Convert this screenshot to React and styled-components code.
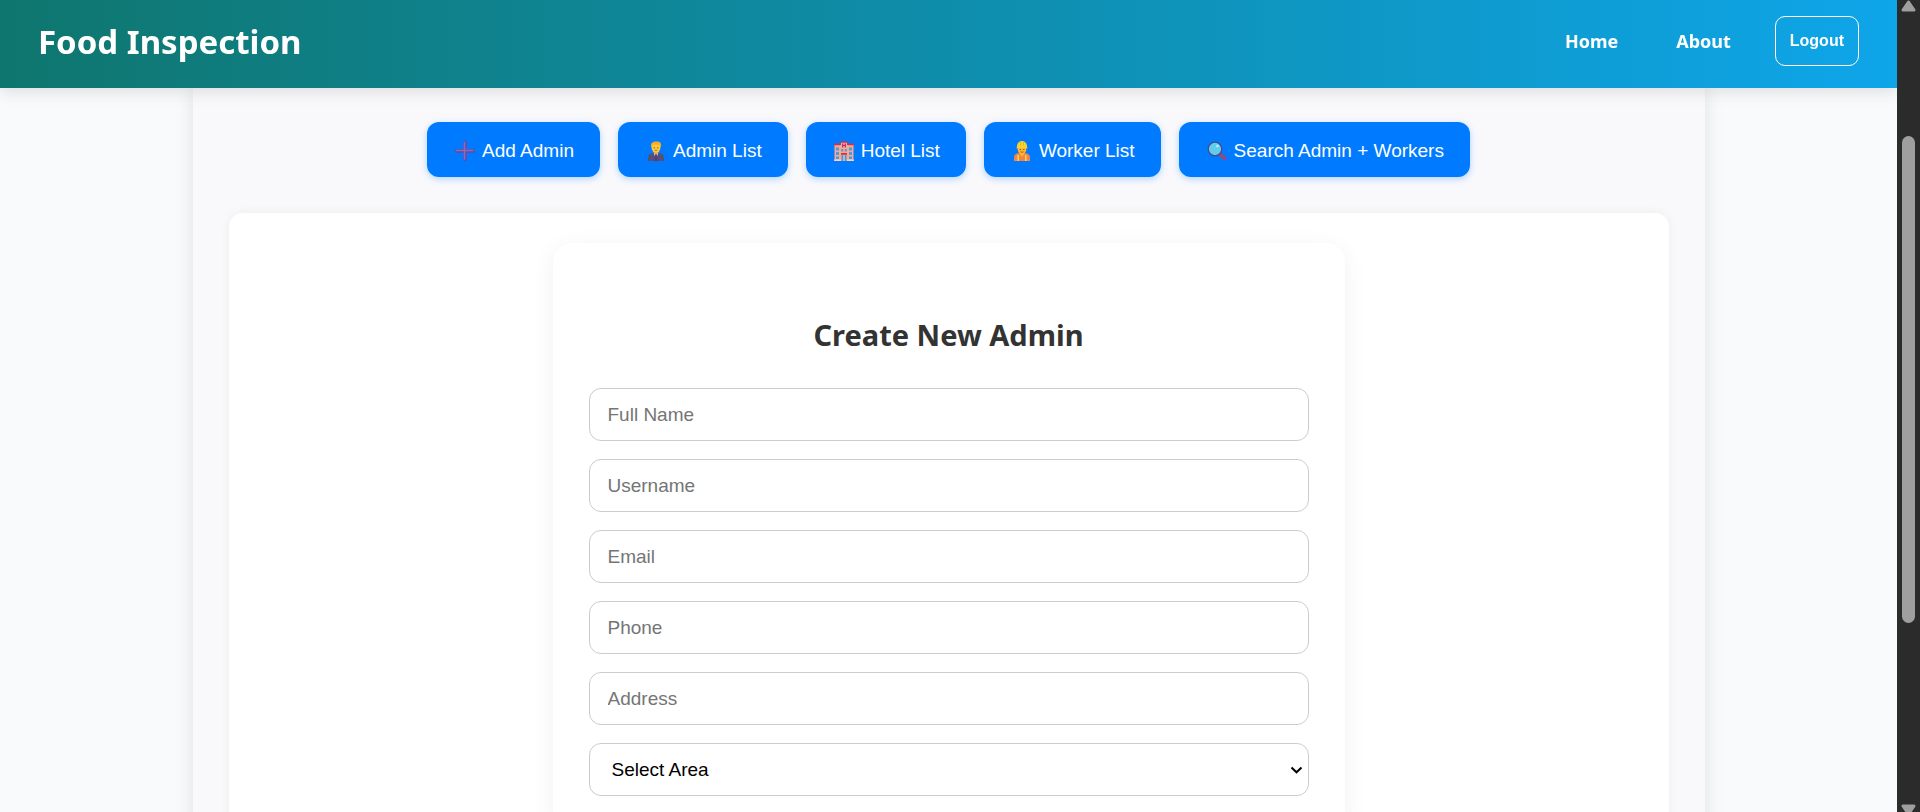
import React from "react";
import styled, { createGlobalStyle } from "styled-components";

const GlobalStyle = createGlobalStyle`
  * { box-sizing: border-box; }
  body {
    margin: 0;
    background: #f8fafc;
    font-family: "Noto Sans", "Open Sans", sans-serif;
  }
`;

const Shell = styled.div`
  display: grid;
  grid-template-columns: minmax(0, 1fr) 23px;
  height: 100vh;
`;

const Viewport = styled.div`
  overflow-y: auto;
  scrollbar-width: none;
`;

const Header = styled.header`
  position: sticky;
  top: 0;
  z-index: 10;
  display: flex;
  align-items: center;
  justify-content: space-between;
  height: 88px;
  padding: 0 38px;
  color: #fff;
  background: linear-gradient(90deg, #0f766e, #0ea5e9);
  box-shadow: 0 5px 14px rgba(0, 0, 0, 0.1);
`;

const Brand = styled.h1`
  margin: 0;
  padding-bottom: 4px;
  font-size: 33px;
  line-height: 48px;
  font-weight: 700;
`;

const Nav = styled.nav`
  display: flex;
  align-items: center;
  gap: 44px;
`;

const NavLink = styled.a`
  padding: 0 0 6px 14px;
  color: #fff;
  font-size: 18px;
  line-height: 24px;
  font-weight: 700;
  text-decoration: none;
`;

const Logout = styled.button`
  height: 50px;
  margin-bottom: 6px;
  padding: 0 14px;
  border: 1px solid #fff;
  border-radius: 10px;
  background: transparent;
  color: #fff;
  font: 700 16px/24px "Liberation Sans", Arial, sans-serif;
`;

const Page = styled.main`
  max-width: 1512px;
  margin: 0 auto;
  padding: 34px 36px 36px;
  background: #f9f9fc;
  box-shadow: 0 0 18px rgba(0, 0, 0, 0.1);
`;

const Toolbar = styled.div`
  display: flex;
  flex-wrap: wrap;
  justify-content: center;
  gap: 18px;
  margin-bottom: 36px;
`;

const ToolButton = styled.button`
  display: flex;
  align-items: center;
  gap: 7px;
  height: 55px;
  padding: 2px 26px 0 28px;
  border: 0;
  border-radius: 12px;
  background: #007bff;
  color: #fff;
  font: 19px/24px "Liberation Sans", Arial, sans-serif;
  white-space: nowrap;
  box-shadow: 0 2px 7px rgba(0, 123, 255, 0.3);
`;

const Panel = styled.section`
  padding: 30px;
  border-radius: 14px;
  background: #fff;
  box-shadow: 0 0 12px rgba(0, 0, 0, 0.05);
`;

const FormCard = styled.form`
  display: flex;
  flex-direction: column;
  gap: 18px;
  max-width: 792px;
  margin: 0 auto;
  padding: 70px 36px 36px;
  border-radius: 19px;
  background: #fff;
  box-shadow: 0 5px 24px rgba(0, 0, 0, 0.06);
`;

const Title = styled.h2`
  margin: 0 0 14px;
  color: #333;
  font-size: 29px;
  line-height: 43px;
  font-weight: 700;
  text-align: center;
`;

const Field = styled.input`
  width: 100%;
  height: 53px;
  padding: 0 18px;
  border: 1px solid #ccc;
  border-radius: 12px;
  background: #fff;
  font: 19px/24px "Liberation Sans", Arial, sans-serif;
  &::placeholder { color: #757575; }
`;

const SelectWrap = styled.div`
  position: relative;
`;

const SelectField = styled.select`
  display: block;
  width: 100%;
  height: 53px;
  padding: 0 22px;
  border: 1px solid #ccc;
  border-radius: 12px;
  appearance: none;
  background: #fff;
  color: #000;
  font: 19px/24px "Liberation Sans", Arial, sans-serif;
`;

const Chevron = styled.svg`
  position: absolute;
  top: 23px;
  right: 6px;
  pointer-events: none;
`;

const ScrollTrack = styled.div`
  display: flex;
  flex-direction: column;
  align-items: center;
  background: #2b2b2b;
`;

const ScrollThumb = styled.div`
  width: 13px;
  height: 60%;
  margin: 124px 0 auto;
  border-radius: 7px;
  background: #9f9f9f;
`;

const PlusIcon = () => (
  <svg width="20" height="20" viewBox="0 0 20 20" aria-hidden="true">
    <path d="M10 1.500V18.500M1.500 10H18.500" stroke="#6a43ad" strokeWidth="3.400" strokeLinecap="round" />
    <path d="M9.500 1.500V18M1.500 9.500H18" stroke="#8f6cae" strokeWidth="1.600" strokeLinecap="round" />
  </svg>
);

const AdminIcon = () => (
  <svg width="20" height="20" viewBox="0 0 20 20" aria-hidden="true">
    <path d="M2 20v-3.500q0-4 5-4.500h6q5 .5 5 4.500v3.500z" fill="#55507a" />
    <path d="M7.500 11.500h5L10 18z" fill="#d9d2ec" />
    <path d="M9.300 13h1.400l.8 7h-3z" fill="#4c3f7c" />
    <rect x="8" y="9" width="4" height="3.500" fill="#e99a22" />
    <ellipse cx="10" cy="6.600" rx="4.400" ry="5" fill="#ffc83d" />
    <path d="M5.300 6.500C4 2 7 .5 10.500.5S16 2 14.700 6.500L13.500 4 8.500 3.500 6.300 4.500z" fill="#f9ae1f" />
    <circle cx="8.300" cy="6.800" r=".6" fill="#6b3b20" />
    <circle cx="11.800" cy="6.800" r=".6" fill="#6b3b20" />
    <path d="M8.500 9q1.500 1 3 0" stroke="#b3562a" strokeWidth=".8" fill="none" />
  </svg>
);

const HotelIcon = () => (
  <svg width="20" height="20" viewBox="0 0 20 20" aria-hidden="true">
    <path d="M.5 4H7V1h6v3h6.500v16H.5z" fill="#f8a79c" />
    <path d="M0 2.500h6v1.800H0zM14 2.500h6v1.800h-6zM6 .5h8v1.200H6zM7 12h6v1.800H7z" fill="#d5303e" />
    <path d="M8.700 2.500v4M11.300 2.500v4M8.700 4.500h2.600" stroke="#c92a46" strokeWidth="1.200" />
    <path d="M2 6.500h3v3H2zM2 11h3v3H2zM2 15.500h3V18H2zM15 6.500h3v3h-3zM15 11h3v3h-3zM15 15.500h3V18h-3zM7.200 8h2v2.500h-2zM10.800 8h2v2.500h-2z" fill="#4a9fce" />
    <path d="M7.500 14h5v6h-5z" fill="#5a94c2" />
    <path d="M10 14v6M0 19.200h7M13 19.200h7" stroke="#fce4da" strokeWidth="1" />
  </svg>
);

const WorkerIcon = () => (
  <svg width="20" height="20" viewBox="0 0 20 20" aria-hidden="true">
    <path d="M2 20v-3.500q0-4 5-4.500h6q5 .5 5 4.500v3.500z" fill="#f28444" />
    <path d="M6.200 14v6M13.800 14v6" stroke="#fadb47" strokeWidth="1.500" />
    <path d="M7.500 12h5L10 16z" fill="#ffc02e" />
    <ellipse cx="10" cy="8" rx="4.400" ry="5" fill="#ffb52e" />
    <path d="M5 6V4.500Q6 0 10 0t5 4.500V6l.8 1.200H4.200z" fill="#f7d32f" />
    <path d="M8.500.5v4M11.500.5v4" stroke="#e3a81c" strokeWidth=".7" />
    <circle cx="8.300" cy="8.500" r=".6" fill="#6b3b20" />
    <circle cx="11.800" cy="8.500" r=".6" fill="#6b3b20" />
    <path d="M8.500 10.800q1.500 1 3 0" stroke="#a04423" strokeWidth=".8" fill="none" />
  </svg>
);

const SearchIcon = () => (
  <svg width="20" height="20" viewBox="0 0 20 20" aria-hidden="true">
    <path d="M13 13.200L17.800 17.600" stroke="#96497c" strokeWidth="3.600" strokeLinecap="round" />
    <circle cx="8" cy="8" r="6.800" fill="#62cdea" stroke="#474b8d" strokeWidth="1.300" />
    <circle cx="10.500" cy="5" r="1.200" fill="#c5f2fb" />
  </svg>
);

const ArrowUp = () => (
  <svg width="15" height="12" viewBox="0 0 15 12" aria-hidden="true">
    <path d="M7.500 2L13 10H2z" fill="#9f9f9f" stroke="#9f9f9f" strokeWidth="3" strokeLinejoin="round" />
  </svg>
);

const ArrowDown = () => (
  <svg width="15" height="8" viewBox="0 0 15 8" aria-hidden="true">
    <path d="M2 2H13L7.500 10z" fill="#9f9f9f" stroke="#9f9f9f" strokeWidth="3" strokeLinejoin="round" />
  </svg>
);

const tools = [
  { label: "Add Admin", Icon: PlusIcon },
  { label: "Admin List", Icon: AdminIcon },
  { label: "Hotel List", Icon: HotelIcon },
  { label: "Worker List", Icon: WorkerIcon },
  { label: "Search Admin + Workers", Icon: SearchIcon },
];

const fields = [
  { label: "Full Name", type: "text" },
  { label: "Username", type: "text" },
  { label: "Email", type: "email" },
  { label: "Phone", type: "tel" },
  { label: "Address", type: "text" },
];

export default function App() {
  return (
    <>
      <GlobalStyle />
      <Shell>
        <Viewport>
          <Header>
            <Brand>Food Inspection</Brand>
            <Nav>
              <NavLink href="#home">Home</NavLink>
              <NavLink href="#about">About</NavLink>
              <Logout type="button">Logout</Logout>
            </Nav>
          </Header>
          <Page>
            <Toolbar>
              {tools.map(({ label, Icon }) => (
                <ToolButton key={label} type="button">
                  <Icon />
                  {label}
                </ToolButton>
              ))}
            </Toolbar>
            <Panel>
              <FormCard>
                <Title>Create New Admin</Title>
                {fields.map(({ label, type }) => (
                  <Field key={label} type={type} placeholder={label} aria-label={label} />
                ))}
                <SelectWrap>
                  <SelectField aria-label="Select Area" defaultValue="">
                    <option value="">Select Area</option>
                  </SelectField>
                  <Chevron width="13" height="8" viewBox="0 0 13 8" aria-hidden="true">
                    <path d="M1.500 1.500L6.500 6.300L11.500 1.500" fill="none" stroke="#000" strokeWidth="2" />
                  </Chevron>
                </SelectWrap>
              </FormCard>
            </Panel>
          </Page>
        </Viewport>
        <ScrollTrack aria-hidden="true">
          <ArrowUp />
          <ScrollThumb />
          <ArrowDown />
        </ScrollTrack>
      </Shell>
    </>
  );
}
